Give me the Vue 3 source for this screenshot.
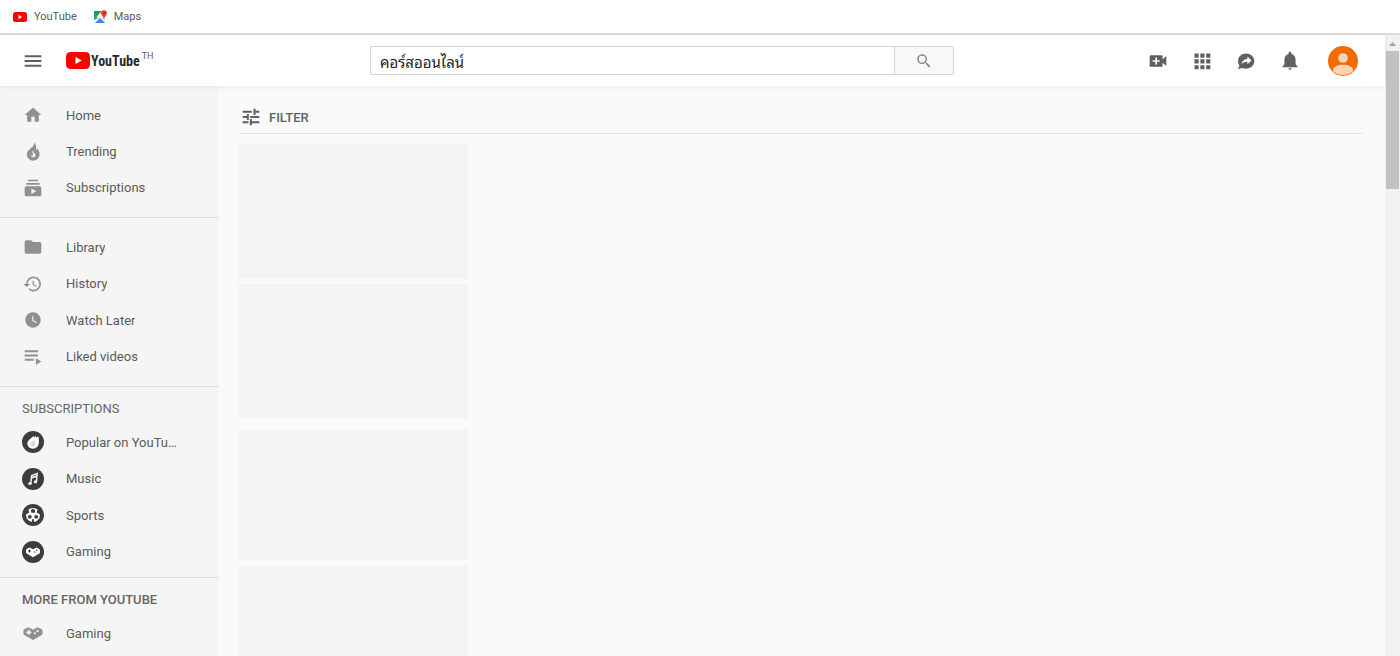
<script setup>
import { ref } from 'vue'

const query = ref('คอร์สออนไลน์')

const glyphs = {
  home: 'M10 20v-6h4v6h5v-8h3L12 3 2 12h3v8z',
  trending: 'M13.500 1.500c.3 3-1.300 4.700-3.700 7C7.400 10.700 4.500 12.500 4.500 16a7.700 7.700 0 0 0 15.400 0c0-3-1.200-5.300-3-7.300-.1 1.300-.5 2.200-1.400 2.700C16.300 8 15.800 4.200 13.500 1.500zM12.500 11c-.4 2 .3 3 1.800 4.300 1.600 1.400.8 4.200-1.700 4.200-1.700 0-2.800-1-3.200-2.500.9.700 2.200.7 2.700-.2.400-.8-.2-1.500-.7-2.400-.6-1.100-.2-2.500 1.100-3.400z',
  subscriptions: 'M20 8H4V6h16v2zm-2-6H6v2h12V2zm4 10v8c0 1.100-.9 2-2 2H4c-1.100 0-2-.9-2-2v-8c0-1.100.9-2 2-2h16c1.100 0 2 .9 2 2zm-6 4l-6-3.270v6.530L16 16z',
  library: 'M10 4H4c-1.100 0-2 .9-2 2v12c0 1.100.9 2 2 2h16c1.100 0 2-.9 2-2V8c0-1.100-.9-2-2-2h-8l-2-2z',
  history: 'M12.500 3a9 9 0 0 0-9 9H0.500l4 4 4-4h-3a7 7 0 1 1 2.100 5l-1.400 1.400A9 9 0 1 0 12.500 3zM11.500 8v5l4.200 2.500.8-1.200-3.500-2.100V8z',
  later: 'M12 2C6.500 2 2 6.500 2 12s4.500 10 10 10 10-4.500 10-10S17.500 2 12 2zm4.200 14.200L11 13V7h1.500v5.200l4.500 2.700-.8 1.300z',
  liked: 'M2 4h16v2.400H2zM2 9h16v2.400H2zM2 14h11v2.400H2zM15.500 13.500v8l6.500-4z',
  gaming: 'M6.500 5L1.500 7.600 0.500 9v4l1 1.500L12 20.500l10.500-6 1-1.500V9l-1-1.400L17.500 5 12 8zM6 8.200h2v2h2v2H8v2H6v-2H4v-2h2zM17.500 8.500a1.300 1.300 0 1 1 0 2.600 1.300 1.300 0 0 1 0-2.600zM14.200 11a1.300 1.300 0 1 1 0 2.600 1.300 1.300 0 0 1 0-2.600z'
}

const sections = [
  { size: 'three', items: [
    { label: 'Home', icon: 'home' },
    { label: 'Trending', icon: 'trending' },
    { label: 'Subscriptions', icon: 'subscriptions' }
  ] },
  { size: 'four', items: [
    { label: 'Library', icon: 'library' },
    { label: 'History', icon: 'history' },
    { label: 'Watch Later', icon: 'later', small: true },
    { label: 'Liked videos', icon: 'liked' }
  ] },
  { title: 'SUBSCRIPTIONS', size: 'four', items: [
    { label: 'Popular on YouTube', badge: 'popular' },
    { label: 'Music', badge: 'music' },
    { label: 'Sports', badge: 'sports' },
    { label: 'Gaming', badge: 'gaming' }
  ] },
  { title: 'MORE FROM YOUTUBE', strong: true, size: 'one', items: [
    { label: 'Gaming', icon: 'gaming' }
  ] }
]

const actions = [
  { label: 'Create', d: 'M17.500 10V6c0-.6-.5-1-1-1H3.500c-1 0-1.500.5-1.500 1v12c0 .6.500 1 1.500 1h13c.6 0 1-.4 1-1v-4l4.500 4V6zM14 13h-3.200v3.200H8.800V13H5.500v-2h3.300V7.800h2V11H14z' },
  { label: 'Apps', d: 'M3 3h5v5H3zM10 3h5v5h-5zM17 3h5v5h-5zM3 10h5v5H3zM10 10h5v5h-5zM17 10h5v5h-5zM3 17h5v5H3zM10 17h5v5h-5zM17 17h5v5h-5z' },
  { label: 'Messages', d: 'M12 3C6.500 3 2.500 6.900 2.500 12c0 2.100.6 3.900 1.700 5.400L2.300 21.500l5.500-1.200c1.300.6 2.700 1 4.200 1 5.500 0 10-4 10-9.200S17.500 3 12 3zm1.700 13v-3c-3.300 0-5.300.8-7 3 .5-3.300 2.300-6 7-6.600V6.700l5 4.600z' },
  { label: 'Notifications', d: 'M12 22.500c1.200 0 2.100-.8 2.100-1.800H9.900c0 1 .9 1.800 2.100 1.800zM18.700 16v-5.500c0-3.500-2-6.200-5-7V2.800C13.700 1.800 13 1 12 1s-1.700.8-1.700 1.800v.7c-3 .8-5 3.500-5 7V16l-2.300 2.500v1h18v-1z' }
]
</script>

<template>
  <div class="window">
    <nav class="bookmarks" aria-label="Bookmarks">
      <a href="#" class="bookmark">
        <svg class="favicon" viewBox="0 0 14 14" aria-hidden="true">
          <rect y="2" width="14" height="10" rx="2.500" fill="#f00" />
          <path d="M5.500 4.800v4.400L9.300 7z" fill="#fff" />
        </svg>
        YouTube
      </a>
      <a href="#" class="bookmark">
        <svg class="favicon" viewBox="0 0 14 14" aria-hidden="true">
          <path d="M1 1h11v12H1z" fill="#e4e8ec" />
          <path d="M1 1h8L1 10z" fill="#1a9e5c" />
          <path d="M1 10l8-9 3 4-9 8H1z" fill="#f5f5f5" />
          <path d="M1 10V5l4 3z" fill="#34a853" />
          <path d="M2 13l5-5 5 5z" fill="#4285f4" />
          <path d="M11 .2a3 3 0 0 0-3 3c0 2 2.400 3 3 6 .6-3 3-4 3-6a3 3 0 0 0-3-3z" fill="#ea4335" />
          <circle cx="11" cy="3.200" r="1.100" fill="#9b241c" />
        </svg>
        Maps
      </a>
    </nav>

    <div class="viewport">
      <div class="page">
        <header class="masthead">
          <div class="brand">
            <button class="icon-button" type="button" aria-label="Guide">
              <svg viewBox="0 0 24 24"><path d="M2 5h20v2.400H2zM2 10.800h20v2.400H2zM2 16.600h20V19H2z" /></svg>
            </button>
            <a href="#" class="logo">
              <svg class="logo-mark" viewBox="0 0 24 17" aria-hidden="true">
                <rect width="24" height="17" rx="4.500" fill="#f00" />
                <path d="M9.500 4.900v7.200l6.200-3.600z" fill="#fff" />
              </svg>
              <span class="logo-name">YouTube</span>
              <span class="country">TH</span>
            </a>
          </div>

          <form class="search" role="search" @submit.prevent>
            <input v-model="query" type="text" aria-label="Search" spellcheck="false" />
            <button type="submit" aria-label="Search">
              <svg viewBox="0 0 24 24"><path d="M15.500 14h-.8l-.3-.3A6.500 6.500 0 1 0 13.700 14.400l.3.3v.8l5 5 1.500-1.500-5-5zm-6 0a4.500 4.500 0 1 1 0-9 4.500 4.500 0 0 1 0 9z" /></svg>
            </button>
          </form>

          <div class="actions">
            <button v-for="a in actions" :key="a.label" class="icon-button" type="button" :aria-label="a.label">
              <svg viewBox="0 0 24 24"><path :d="a.d" fill-rule="evenodd" /></svg>
            </button>
            <button class="avatar" type="button" aria-label="Account">
              <svg viewBox="0 0 30 30">
                <circle cx="15" cy="15" r="15" fill="#ef6c00" />
                <circle cx="15" cy="12" r="4.800" fill="#fbd3b6" />
                <path d="M5 24c0-3.200 4.500-5.200 10-5.200S25 20.800 25 24v1.300a15 15 0 0 1-20 0z" fill="#fbd3b6" />
              </svg>
            </button>
          </div>
        </header>

        <div class="body">
          <nav class="guide" aria-label="Guide">
            <section v-for="(s, i) in sections" :key="i" :class="{ titled: s.title }">
              <h3 v-if="s.title" :class="{ strong: s.strong }">{{ s.title }}</h3>
              <ul :class="s.size">
                <li v-for="item in s.items" :key="item.label">
                  <a href="#">
                    <svg v-if="item.icon" class="glyph" :viewBox="item.small ? '-1 -1 26 26' : '0 0 24 24'" aria-hidden="true">
                      <path :d="glyphs[item.icon]" fill-rule="evenodd" />
                    </svg>
                    <svg v-else class="badge" viewBox="0 0 22 22" aria-hidden="true">
                      <circle cx="11" cy="11" r="11" fill="#3d3d3d" />
                      <g v-if="item.badge === 'popular'">
                        <path d="M11.500 5l.6 1.400L14 4.800l.4 1.600L16.500 5.600c.4 2.500.5 5 .2 7-.4 3-2.700 5.200-5.700 5.200-3.200 0-5.600-2.200-5.600-5.200C5.400 9.300 8.500 8 11.500 5z" fill="#fff" />
                        <path d="M13 8.500c.8 4 .4 7-2.300 7-1.500 0-2.400-1-2.400-2.300 0-2 3-2.200 4.700-4.700z" fill="#d9d9d9" />
                      </g>
                      <g v-else-if="item.badge === 'music'" fill="#f1f1f1">
                        <path d="M9 7l7-2.400-.8 9h-1.500l.4-4.300-4 1.300-.6 4.800H8z" />
                        <ellipse cx="8" cy="15.500" rx="1.800" ry="1.600" />
                        <ellipse cx="13.500" cy="13.800" rx="1.800" ry="1.600" />
                        <path d="M10.300 7.900l4-1.300v.7l-4 1.300z" fill="#3d3d3d" />
                      </g>
                      <g v-else-if="item.badge === 'sports'">
                        <circle cx="11" cy="11" r="7" fill="#fff" />
                        <path d="M8.800 6.200L11 4.800l2.200 1.400-.5 2.600H9.300zM3 6h3.500l.8 2.500L4 10.500zM19 6h-3.500l-.8 2.500 3.300 2z" fill="#3d3d3d" />
                        <circle cx="7.800" cy="12.800" r="1.900" fill="#3d3d3d" />
                        <circle cx="14.200" cy="12.800" r="1.900" fill="#3d3d3d" />
                        <path d="M10.300 15h1.400l.5 3.500H9.800z" fill="#3d3d3d" />
                      </g>
                      <g v-else>
                        <path d="M7.500 6.500L4.600 8 4 9v2.500l.6 1L11 16.200l6.400-3.700.6-1V9l-.6-1-2.900-1.500L11 8.300z" fill="#fff" />
                        <path d="M7 8.500h1v1h1v1H8v1H7v-1H6v-1h1z" fill="#3d3d3d" />
                        <circle cx="14.800" cy="9.200" r=".8" fill="#3d3d3d" />
                        <circle cx="12.800" cy="11" r=".8" fill="#3d3d3d" />
                      </g>
                    </svg>
                    <span>{{ item.label }}</span>
                  </a>
                </li>
              </ul>
            </section>
          </nav>

          <main class="results">
            <div class="toolbar">
              <button class="filter" type="button">
                <svg viewBox="0 0 24 24" aria-hidden="true"><path d="M2 17v2.400h7V17zM2 4.600V7h11V4.600zM13 22v-2.600h9V17h-9v-2.600h-2.400V22zM7 8.500v2.300H2v2.400h5v2.300h2.400v-7zM22 13.200v-2.400H11v2.400zM15 9.500h2.400V7H22V4.600h-4.600V2H15z" /></svg>
                FILTER
              </button>
            </div>
            <div class="placeholders">
              <div class="pair"><div class="thumb"></div><div class="thumb"></div></div>
              <div class="pair short"><div class="thumb"></div><div class="thumb"></div></div>
            </div>
          </main>
        </div>
      </div>

      <div class="scrollbar" aria-hidden="true">
        <svg viewBox="0 0 15 16"><path d="M4 11l3.500-4 3.500 4z" fill="#a0a0a0" /></svg>
        <div class="thumb-handle"></div>
      </div>
    </div>
  </div>
</template>

<style>
body {
  margin: 0;
  overflow: hidden;
}
</style>

<style scoped>
* {
  box-sizing: border-box;
}
.window {
  display: flex;
  flex-direction: column;
  height: 100vh;
  overflow: hidden;
  background: #fff;
  color: #5a5a5a;
  font-family: Roboto, "Noto Sans", sans-serif;
  font-size: 13px;
}
a {
  color: inherit;
  text-decoration: none;
}
button {
  padding: 0;
  border: 0;
  background: none;
  color: inherit;
  font: inherit;
  cursor: pointer;
}
svg {
  display: block;
  flex: none;
}
.bookmarks {
  display: flex;
  align-items: center;
  flex: none;
  gap: 16px;
  height: 35px;
  padding: 0 13px;
  border-bottom: 2px solid #dcdcdc;
  font-size: 11px;
}
.bookmark {
  display: flex;
  align-items: center;
  gap: 7px;
}
.favicon {
  width: 14px;
  height: 14px;
}
.viewport {
  display: flex;
  flex: 1;
  min-height: 0;
}
.page {
  display: flex;
  flex: 1;
  flex-direction: column;
  min-width: 0;
  background: #fafafa;
}
.masthead {
  position: relative;
  display: flex;
  align-items: center;
  flex: none;
  height: 51px;
  padding-right: 27px;
  background: #fff;
  box-shadow: 0 1px 4px rgba(0, 0, 0, 0.08);
}
.brand {
  display: flex;
  align-items: center;
  flex: none;
  gap: 22px;
  width: 370px;
  padding-left: 22px;
}
.icon-button svg,
.glyph {
  width: 20px;
  height: 20px;
  margin: 0 1px;
}
.icon-button svg {
  fill: #606060;
}
.logo {
  display: flex;
  align-items: center;
}
.logo-mark {
  width: 24px;
  height: 17px;
}
.logo-name {
  margin-left: 1px;
  color: #282828;
  font-family: "Liberation Sans Narrow", "Roboto Condensed", Roboto, sans-serif;
  font-size: 14px;
  font-weight: 700;
  line-height: 20px;
}
.country {
  align-self: flex-start;
  margin-left: 2px;
  font-size: 9px;
  line-height: 10px;
}
.search {
  display: flex;
  flex: 0 1 584px;
  min-width: 0;
  height: 29px;
}
.search input {
  flex: 1;
  min-width: 0;
  padding: 0 9px;
  border: 1px solid #d3d3d3;
  border-right: 0;
  border-radius: 2px 0 0 2px;
  outline: 0;
  background: #fff;
  color: #222;
  font-family: "Noto Sans Thai Looped", Loma, Waree, Roboto, sans-serif;
  font-size: 15px;
}
.search button {
  display: grid;
  place-items: center;
  width: 60px;
  border: 1px solid #d3d3d3;
  border-radius: 0 2px 2px 0;
  background: #f8f8f8;
}
.search svg {
  width: 18px;
  height: 18px;
  fill: #888;
}
.actions {
  display: flex;
  align-items: center;
  flex: none;
  gap: 22px;
  margin-left: auto;
}
.avatar {
  width: 30px;
  height: 30px;
  margin-left: 5px;
}
.body {
  display: flex;
  flex: 1;
  min-height: 0;
}
.guide {
  flex: none;
  width: 219px;
  overflow: hidden;
  background: #f5f5f5;
}
.guide section {
  padding: 11px 0;
  border-bottom: 1px solid #dedede;
}
.guide section.titled {
  padding-bottom: 7px;
}
.guide section:last-child {
  border-bottom: 0;
}
.guide h3 {
  margin: 0 0 4px;
  padding-left: 22px;
  color: #666;
  font-size: 13px;
  font-weight: 400;
  line-height: 22px;
}
.guide h3.strong {
  font-weight: 500;
}
.guide ul {
  display: grid;
  grid-template-columns: minmax(0, 1fr);
  grid-auto-rows: 1fr;
  margin: 0;
  padding: 0;
  list-style: none;
}
.guide .one {
  min-height: 36px;
}
.guide .three {
  min-height: 109px;
}
.guide .four {
  min-height: 146px;
}
.guide a {
  display: flex;
  align-items: center;
  gap: 22px;
  height: 100%;
  padding: 0 40px 0 22px;
}
.guide a span {
  overflow: hidden;
  text-overflow: ellipsis;
  white-space: nowrap;
}
.badge {
  width: 22px;
  height: 22px;
}
.glyph {
  fill: #909090;
}
.results {
  flex: 1;
  min-width: 0;
  padding: 15px 23px 0 19px;
  overflow: hidden;
}
.toolbar {
  margin-left: 2px;
  border-bottom: 1px solid #e2e2e2;
}
.filter {
  display: flex;
  align-items: center;
  gap: 8px;
  height: 32px;
  color: #606060;
  font-weight: 500;
}
.filter svg {
  width: 20px;
  height: 20px;
  margin-left: 1px;
  fill: #606060;
}
.placeholders,
.pair {
  display: flex;
  flex-direction: column;
}
.placeholders {
  gap: 10px;
  width: 230px;
  padding-top: 10px;
}
.pair {
  gap: 5px;
}
.thumb {
  height: 135px;
  background: #f4f4f4;
}
.short .thumb {
  height: 131px;
}
.scrollbar {
  flex: none;
  width: 15px;
  background: #f1f1f1;
}
.scrollbar svg {
  width: 15px;
  height: 16px;
}
.thumb-handle {
  height: 138px;
  margin: 0 1px;
  background: #c1c1c1;
}
</style>
